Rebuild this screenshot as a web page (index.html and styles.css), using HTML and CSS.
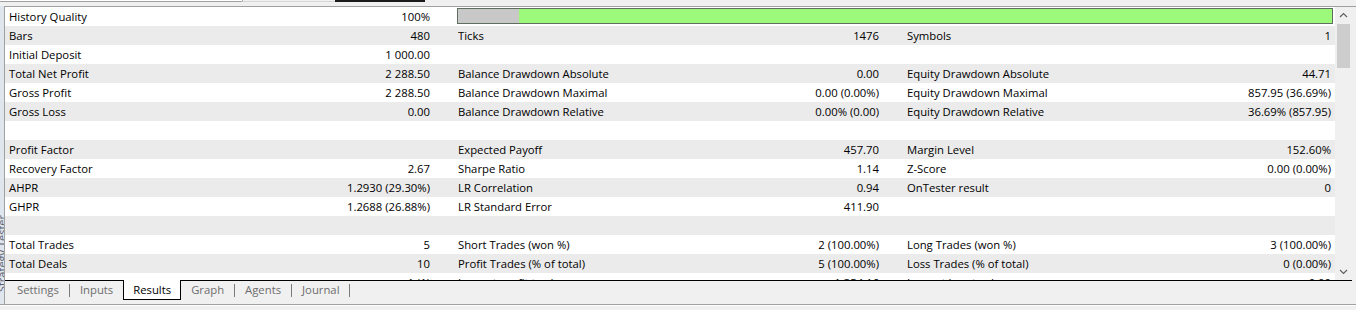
FILE: index.html
```html
<!DOCTYPE html>
<html lang="en">
<head>
    <meta charset="UTF-8">
    <title>Strategy Tester - Results</title>
    <link rel="stylesheet" href="styles.css">
</head>
<body>
    <div class="top">
        <div class="top-box"></div>
        <div class="top-gap"></div>
        <div class="top-bar"></div>
    </div>
    <div class="wrap">
        <div class="side"><span>Strategy Tester</span></div>
        <div class="panel">
            <div class="view">
                <div class="table">
                    <div class="row">
                        <div class="cell"><span>History Quality</span><span>100%</span></div>
                        <div class="quality"><div class="quality-gray"></div><div class="quality-green"></div></div>
                    </div>
                    <div class="row">
                        <div class="cell"><span>Bars</span><span>480</span></div>
                        <div class="cell"><span>Ticks</span><span>1476</span></div>
                        <div class="cell"><span>Symbols</span><span>1</span></div>
                    </div>
                    <div class="row">
                        <div class="cell"><span>Initial Deposit</span><span>1 000.00</span></div>
                        <div class="cell"></div>
                        <div class="cell"></div>
                    </div>
                    <div class="row">
                        <div class="cell"><span>Total Net Profit</span><span>2 288.50</span></div>
                        <div class="cell"><span>Balance Drawdown Absolute</span><span>0.00</span></div>
                        <div class="cell"><span>Equity Drawdown Absolute</span><span>44.71</span></div>
                    </div>
                    <div class="row">
                        <div class="cell"><span>Gross Profit</span><span>2 288.50</span></div>
                        <div class="cell"><span>Balance Drawdown Maximal</span><span>0.00 (0.00%)</span></div>
                        <div class="cell"><span>Equity Drawdown Maximal</span><span>857.95 (36.69%)</span></div>
                    </div>
                    <div class="row">
                        <div class="cell"><span>Gross Loss</span><span>0.00</span></div>
                        <div class="cell"><span>Balance Drawdown Relative</span><span>0.00% (0.00)</span></div>
                        <div class="cell"><span>Equity Drawdown Relative</span><span>36.69% (857.95)</span></div>
                    </div>
                    <div class="row"></div>
                    <div class="row">
                        <div class="cell"><span>Profit Factor</span><span></span></div>
                        <div class="cell"><span>Expected Payoff</span><span>457.70</span></div>
                        <div class="cell"><span>Margin Level</span><span>152.60%</span></div>
                    </div>
                    <div class="row">
                        <div class="cell"><span>Recovery Factor</span><span>2.67</span></div>
                        <div class="cell"><span>Sharpe Ratio</span><span>1.14</span></div>
                        <div class="cell"><span>Z-Score</span><span>0.00 (0.00%)</span></div>
                    </div>
                    <div class="row">
                        <div class="cell"><span>AHPR</span><span>1.2930 (29.30%)</span></div>
                        <div class="cell"><span>LR Correlation</span><span>0.94</span></div>
                        <div class="cell"><span>OnTester result</span><span>0</span></div>
                    </div>
                    <div class="row">
                        <div class="cell"><span>GHPR</span><span>1.2688 (26.88%)</span></div>
                        <div class="cell"><span>LR Standard Error</span><span>411.90</span></div>
                        <div class="cell"></div>
                    </div>
                    <div class="row"></div>
                    <div class="row">
                        <div class="cell"><span>Total Trades</span><span>5</span></div>
                        <div class="cell"><span>Short Trades (won %)</span><span>2 (100.00%)</span></div>
                        <div class="cell"><span>Long Trades (won %)</span><span>3 (100.00%)</span></div>
                    </div>
                    <div class="row">
                        <div class="cell"><span>Total Deals</span><span>10</span></div>
                        <div class="cell"><span>Profit Trades (% of total)</span><span>5 (100.00%)</span></div>
                        <div class="cell"><span>Loss Trades (% of total)</span><span>0 (0.00%)</span></div>
                    </div>
                    <div class="row">
                        <div class="cell"><span></span><span>1 (1)</span></div>
                        <div class="cell"><span>Largest profit trade</span><span>1 354.16</span></div>
                        <div class="cell"><span>Largest loss trade</span><span>0.00</span></div>
                    </div>
                </div>
                <div class="scroll">
                    <div class="scroll-btn">
                        <svg width="17" height="17" viewBox="0 0 17 17"><polyline points="5,10 8.5,6.5 12,10" fill="none" stroke="#606060" stroke-width="1.2"/></svg>
                    </div>
                    <div class="scroll-track"><div class="scroll-thumb"></div></div>
                    <div class="scroll-btn">
                        <svg width="17" height="17" viewBox="0 0 17 17"><polyline points="5,7 8.5,10.5 12,7" fill="none" stroke="#606060" stroke-width="1.2"/></svg>
                    </div>
                </div>
            </div>
            <div class="tabs">
                <span class="tab">Settings</span>
                <span class="sep"></span>
                <span class="tab">Inputs</span>
                <span class="tab active">Results</span>
                <span class="tab">Graph</span>
                <span class="sep"></span>
                <span class="tab">Agents</span>
                <span class="sep"></span>
                <span class="tab">Journal</span>
                <span class="sep"></span>
            </div>
        </div>
    </div>
    <div class="foot"></div>
</body>
</html>
```

FILE: styles.css
```css
body {
    margin: 0;
    width: 1356px;
    height: 310px;
    overflow: hidden;
    background-color: #f0f0f0;
    font-family: "Open Sans", "Liberation Sans", sans-serif;
    font-size: 11.3px;
    color: #000;
}
.top {
    display: flex;
    height: 6px;
}
.top-box {
    width: 242px;
    height: 1px;
    background-color: #fff;
    border-bottom: 1px solid #a0a0a0;
    border-right: 1px solid #a0a0a0;
    border-bottom-right-radius: 2px;
}
.top-gap {
    width: 92px;
    height: 1px;
    border-bottom: 1px solid #d6d6d6;
}
.top-bar {
    width: 90px;
    height: 2px;
    background-color: #1a1a1a;
}
.wrap {
    display: flex;
    height: 298px;
}
.side {
    width: 4px;
    border-right: 1px solid #a0a0a0;
    background-color: #dfe6ee;
    overflow: hidden;
    display: flex;
    align-items: flex-end;
}
.side span {
    writing-mode: vertical-rl;
    transform: rotate(180deg);
    font-size: 11px;
    color: #5a6470;
    margin-left: -6px;
    padding-top: 12px;
    white-space: nowrap;
}
.panel {
    flex: 1;
    display: flex;
    flex-direction: column;
}
.view {
    display: flex;
    height: 273px;
    border-top: 1px solid #a0a0a0;
    padding-right: 4px;
}
.table {
    width: 1330px;
    height: 273px;
    overflow: hidden;
    background-color: #fff;
}
.row {
    display: grid;
    grid-template-columns: 421px 421px 1fr;
    column-gap: 28px;
    align-items: center;
    height: 19px;
    padding: 0 4px;
    white-space: nowrap;
}
.row:nth-child(even) {
    background-color: #ebebeb;
}
.cell {
    display: flex;
    justify-content: space-between;
    line-height: 19px;
}
.quality {
    grid-column: 2 / 4;
    display: flex;
    height: 14px;
    margin: 0 -2px 1px -1px;
    border: 1px solid #5f6f5f;
}
.quality-gray {
    width: 61px;
    background-color: #c8c8c8;
}
.quality-green {
    flex: 1;
    background-color: #9cf97c;
}
.scroll {
    width: 17px;
    display: flex;
    flex-direction: column;
    background-color: #f0f0f0;
}
.scroll-btn {
    height: 17px;
}
.scroll-btn svg {
    display: block;
}
.scroll-track {
    flex: 1;
}
.scroll-thumb {
    width: 13px;
    height: 44px;
    margin-left: 2px;
    background-color: #cdcdcd;
}
.tabs {
    display: flex;
    align-items: flex-start;
    height: 19px;
    margin-right: 4px;
    padding-left: 2px;
    border-top: 1px solid #000;
}
.tab {
    height: 18px;
    line-height: 18px;
    padding: 0 10px;
    color: #6d6d6d;
}
.tab.active {
    margin-top: -1px;
    height: 19px;
    line-height: 20px;
    padding: 0 9px;
    color: #000;
    background-color: #fff;
    border: 1px solid #000;
    border-top: none;
}
.sep {
    width: 1px;
    height: 13px;
    margin-top: 3px;
    background-color: #7a7a7a;
}
.foot {
    height: 4px;
    border-top: 1px solid #a0a0a0;
    box-shadow: inset 0 1px #fff;
}
```
